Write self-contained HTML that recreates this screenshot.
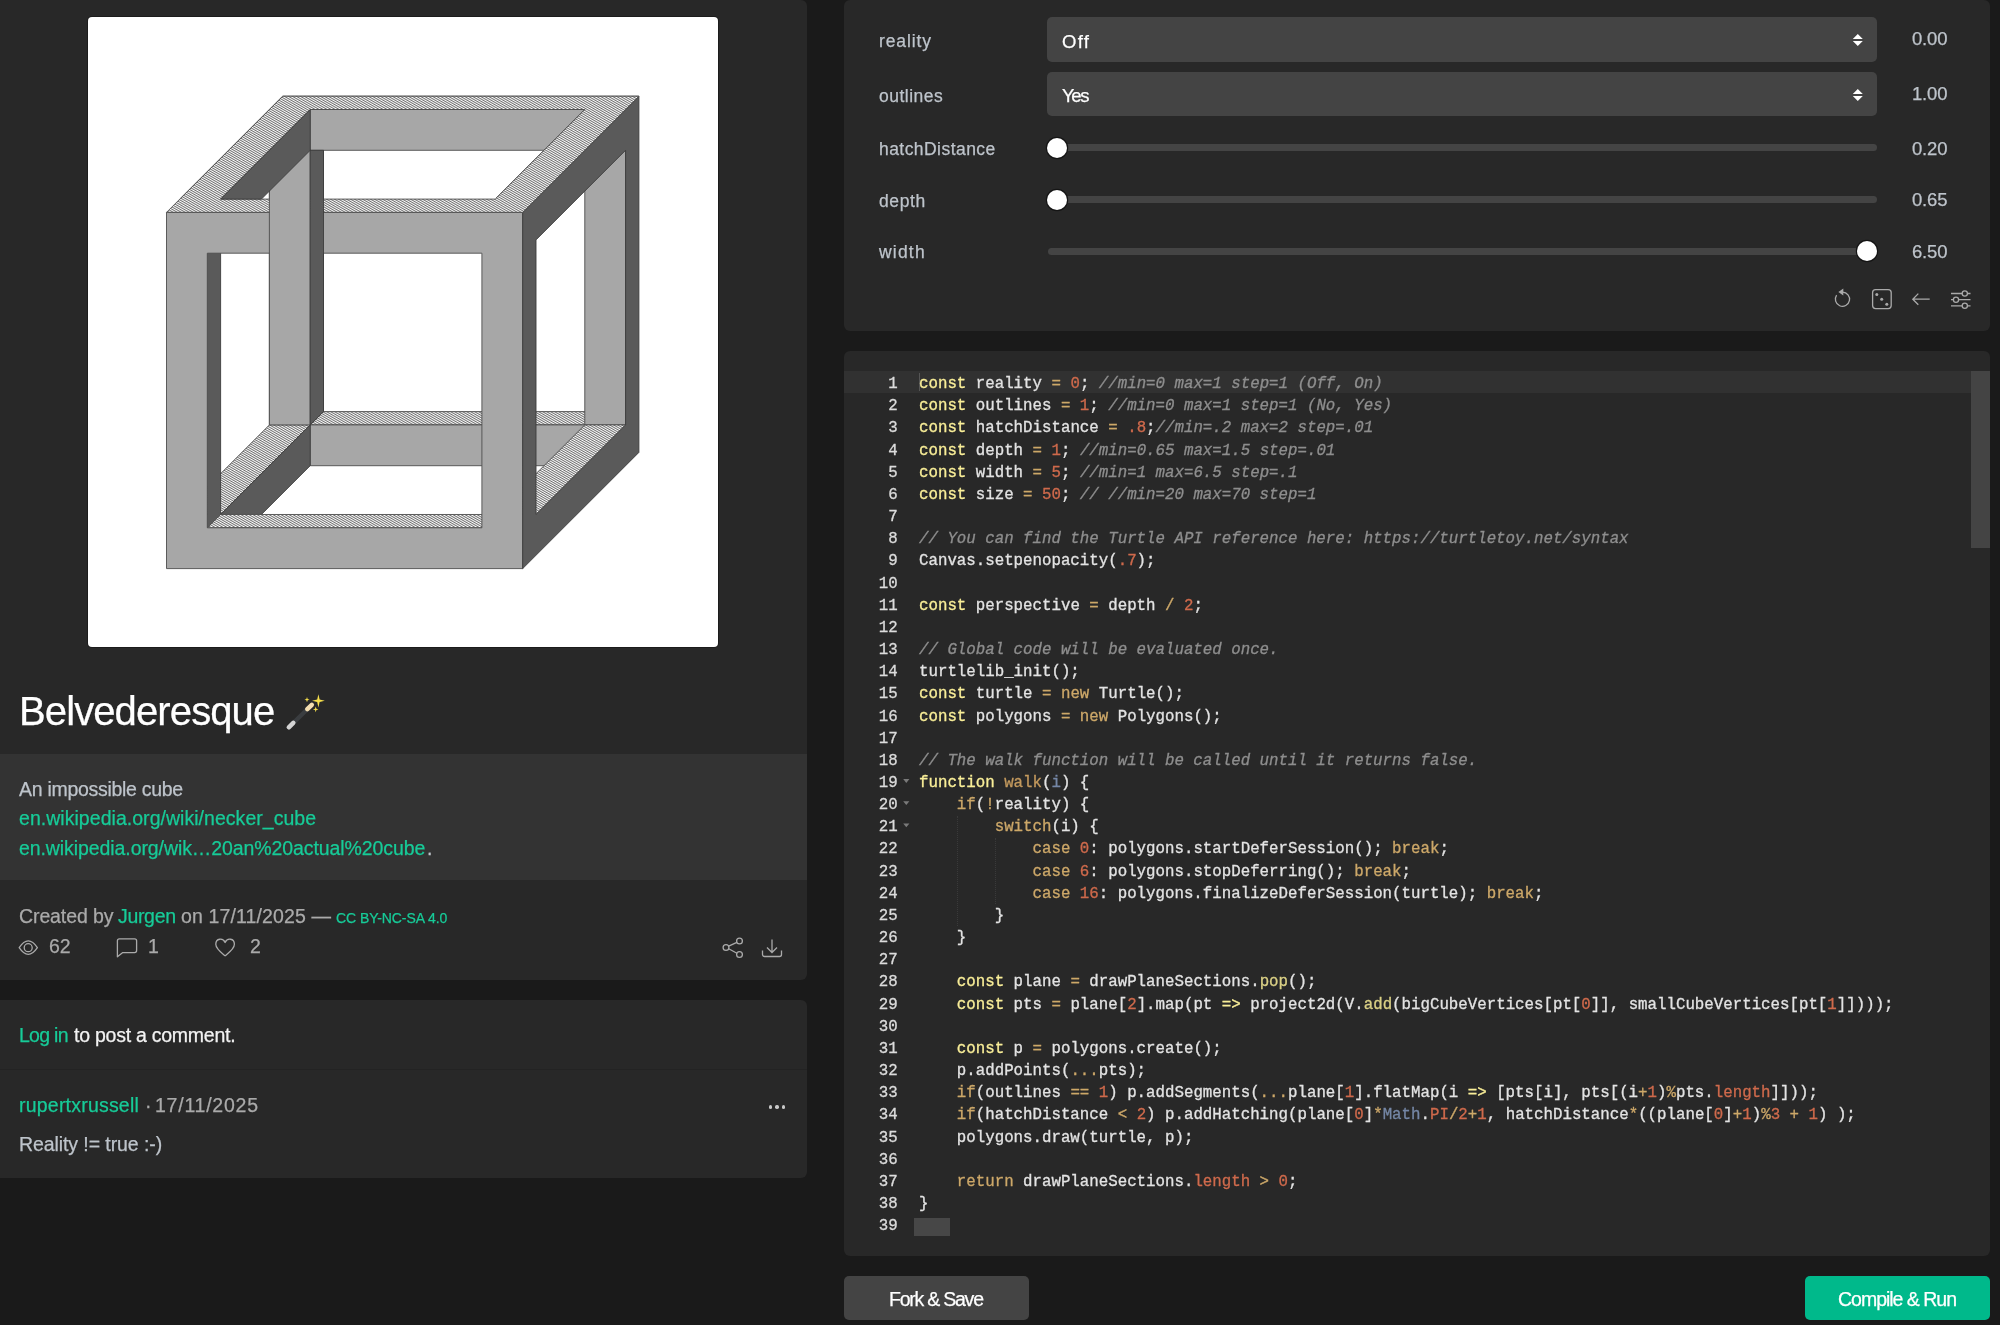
<!DOCTYPE html>
<html><head><meta charset="utf-8"><title>Belvederesque - Turtletoy</title>
<style>
html,body{margin:0;padding:0}
body{width:2000px;height:1325px;overflow:hidden;background:#1a1a1a;position:relative;font-family:"Liberation Sans",sans-serif}
.abs{position:absolute}
.tx{position:absolute;white-space:pre;line-height:0;font-family:"Liberation Sans",sans-serif;will-change:transform;-webkit-text-stroke:0.25px currentColor}
.tx::before{content:"";display:inline-block;height:0}
#ltop{left:0;top:0;width:807px;height:980px;background:#282828;border-radius:0 6px 6px 0}
#ldesc{left:0;top:753.8px;width:807px;height:126.7px;background:#333333}
#lmeta{left:0;top:880.5px;width:807px;height:99.5px;background:#282828;border-bottom-right-radius:6px}
#lcom{left:0;top:1000px;width:807px;height:178px;background:#282828;border-radius:0 6px 6px 0}
#ldiv{left:0;top:1069px;width:807px;height:1px;background:#232323}
#canvas{left:88px;top:17px;width:630px;height:630px;background:#fff;border-radius:4px;box-shadow:0 0 0 1px #1c1c1c;overflow:hidden}
#rtop{left:844px;top:0;width:1145.5px;height:330.6px;background:#282828;border-radius:6px}
.sel{position:absolute;left:1047px;width:830px;height:44.4px;background:#444444;border-radius:5px}
.track{position:absolute;left:1047.5px;width:829.5px;height:7px;background:#444444;border-radius:3.5px}
.thumb{position:absolute;width:20px;height:20px;background:#fff;border-radius:50%;box-shadow:0 0 0 1.2px #151515}
#editor{left:844px;top:351px;width:1145.5px;height:904.6px;background:#282828;border-radius:6px;overflow:hidden}
.cl{position:absolute;left:75px;height:22.16px;line-height:22.16px;white-space:pre;font-family:"Liberation Mono",monospace;font-size:15.77px;color:#e3e3e3;-webkit-text-stroke:0.3px currentColor}
.ln{position:absolute;left:0;width:53.6px;text-align:right;height:22.16px;line-height:22.16px;font-family:"Liberation Mono",monospace;font-size:15.77px;color:#dcdcdc;-webkit-text-stroke:0.3px currentColor}
.cl .s{color:#f9ee98}
.cl .k{color:#cda869}
.cl .n{color:#cf6a4c}
.cl .e{color:#c49a5e}
.cl .v{color:#7587a6}
.cl .sf{color:#dad085}
.cl .c{color:#8e8e8e;font-style:italic}
.btn{position:absolute;top:1276px;height:44px;border-radius:5px}
</style></head>
<body>
<div id="ltop" class="abs"></div>
<div id="ldesc" class="abs"></div>
<div id="lcom" class="abs"></div>
<div id="ldiv" class="abs"></div>
<div id="canvas" class="abs">
<svg width="630" height="630" viewBox="0 0 630 630">
<defs>
<pattern id="hatch" patternUnits="userSpaceOnUse" width="3.4" height="2" patternTransform="rotate(30)">
<rect width="3.4" height="2" fill="#ffffff"/>
<rect y="0" width="3.4" height="0.95" fill="#666"/>
</pattern>
</defs>
<style>
.f{fill:#a7a7a7;stroke:#4d4d4d;stroke-width:0.9}
.t{fill:url(#hatch);stroke:#4d4d4d;stroke-width:0.9}
.d{fill:#5a5a5a;stroke:#3d3d3d;stroke-width:0.9}
</style>
<defs><clipPath id="cpTop"><rect x="0" y="0" width="630" height="181.00"/></clipPath></defs>
<polygon class="d" points="222.19,133.31 222.19,407.91 235.50,394.60 235.50,120.00"/>
<polygon class="t" points="222.19,407.91 496.79,407.91 510.10,394.60 235.50,394.60"/>
<polygon class="f" points="222.19,92.51 496.79,92.51 496.79,133.31 222.19,133.31"/>
<polygon class="f" points="222.19,407.91 496.79,407.91 496.79,448.71 222.19,448.71"/>
<polygon class="f" points="181.39,133.31 222.19,133.31 222.19,407.91 181.39,407.91"/>
<polygon class="f" points="496.79,133.31 537.59,133.31 537.59,407.91 496.79,407.91"/>
<polygon class="t" points="91.81,497.49 132.61,497.49 222.19,407.91 181.39,407.91"/>
<polygon class="d" points="132.61,497.49 132.61,538.29 222.19,448.71 222.19,407.91"/>
<polygon class="t" points="407.21,497.49 448.01,497.49 537.59,407.91 496.79,407.91"/>
<polygon class="d" points="119.30,236.20 119.30,510.80 132.61,497.49 132.61,222.89"/>
<polygon class="t" points="119.30,510.80 393.90,510.80 407.21,497.49 132.61,497.49"/>
<path class="f" fill-rule="evenodd" d="M78.50 195.40 L434.70 195.40 L434.70 551.60 L78.50 551.60 Z M119.30 236.20 L393.90 236.20 L393.90 510.80 L119.30 510.80 Z"/>
<path class="d" fill-rule="evenodd" d="M434.70 195.40 L434.70 551.60 L550.90 435.40 L550.90 79.20 Z M448.01 222.89 L448.01 497.49 L537.59 407.91 L537.59 133.31 Z"/>
<path class="t" fill-rule="evenodd" d="M78.50 195.40 L434.70 195.40 L550.90 79.20 L194.70 79.20 Z M132.61 182.09 L407.21 182.09 L496.79 92.51 L222.19 92.51 Z"/>
<polygon class="f" points="181.39,133.31 222.19,133.31 222.19,407.91 181.39,407.91"/>
<polygon class="d" points="222.19,133.31 222.19,407.91 235.50,394.60 235.50,133.31"/>
<path class="t" fill-rule="evenodd" d="M78.50 195.40 L434.70 195.40 L550.90 79.20 L194.70 79.20 Z M132.61 182.09 L407.21 182.09 L496.79 92.51 L222.19 92.51 Z" clip-path="url(#cpTop)"/>
<polygon class="d" points="132.61,182.09 173.41,182.09 222.19,133.31 222.19,92.51"/>

</svg>
</div>
<!-- magic wand emoji -->
<svg class="abs" style="left:283px;top:690px" width="46" height="44" viewBox="0 0 46 44">
<line x1="10" y1="33.2" x2="24.5" y2="19" stroke="#3a3d40" stroke-width="4.3"/>
<line x1="5.8" y1="37.3" x2="10.3" y2="32.9" stroke="#d4d4d4" stroke-width="4.5" stroke-linecap="round"/>
<line x1="24.3" y1="19.2" x2="28.8" y2="14.8" stroke="#f4deb0" stroke-width="4.5" stroke-linecap="round"/>
<path d="M35.4 4.2 L36.6 9.6 L41.8 10.8 L36.6 12 L35.4 17.4 L34.2 12 L29 10.8 L34.2 9.6 Z" fill="#f6df4c"/>
<path d="M24 7.1 l0.65 1.9 l1.9 0.65 l-1.9 0.65 l-0.65 1.9 l-0.65 -1.9 l-1.9 -0.65 l1.9 -0.65 Z" fill="#f6df4c"/>
<path d="M32.7 16.6 l0.7 2.1 l2.1 0.7 l-2.1 0.7 l-0.7 2.1 l-0.7 -2.1 l-2.1 -0.7 l2.1 -0.7 Z" fill="#f6df4c"/>
</svg>
<!-- meta icons -->
<svg class="abs" style="left:0;top:930px" width="807" height="35" viewBox="0 930 807 35" fill="none" stroke="#aaaaaa" stroke-width="1.3">
<path d="M19.2 947.7 Q28.2 934.2 37.4 947.7 Q28.2 961.2 19.2 947.7 Z" stroke-linejoin="round"/>
<circle cx="28.2" cy="947.7" r="4"/>
<path d="M119.4 938.8 H134.6 Q136.6 938.8 136.6 940.8 V950.6 Q136.6 952.6 134.6 952.6 H122.8 L117.4 956.8 V940.8 Q117.4 938.8 119.4 938.8 Z" stroke-linejoin="round"/>
<path d="M225.1 942.5 C223 937.5 215.8 938.2 215.8 944.3 C215.8 948.8 220.6 952.2 225.1 955.8 C229.6 952.2 234.4 948.8 234.4 944.3 C234.4 938.2 227.2 937.5 225.1 942.5 Z" stroke-linejoin="round"/>
<circle cx="726" cy="947.5" r="2.9"/>
<circle cx="739.5" cy="941" r="2.9"/>
<circle cx="739.5" cy="954.5" r="2.9"/>
<path d="M728.7 946.2 L736.9 942.3 M728.7 948.8 L736.9 953.2"/>
<path d="M772 939.5 V952.5 M767 947.5 L772 952.5 L777 947.5"/>
<path d="M762.5 950.5 V954.5 Q762.5 956.5 764.5 956.5 H779.5 Q781.5 956.5 781.5 954.5 V950.5"/>
</svg>
<div class="abs" style="left:769.1px;top:1105.4px;width:3.4px;height:3.4px;border-radius:50%;background:#c8c8c8"></div>
<div class="abs" style="left:775.3px;top:1105.4px;width:3.4px;height:3.4px;border-radius:50%;background:#c8c8c8"></div>
<div class="abs" style="left:781.5px;top:1105.4px;width:3.4px;height:3.4px;border-radius:50%;background:#c8c8c8"></div>

<!-- right panel -->
<div id="rtop" class="abs"></div>
<div class="sel" style="top:17.4px"></div>
<div class="sel" style="top:72px"></div>
<svg class="abs" style="left:1850px;top:30px" width="16" height="75" viewBox="0 0 16 75" fill="#ffffff">
<path d="M2.8 8.9 L7.8 4 L12.8 8.9 Z M2.8 11.1 L12.8 11.1 L7.8 16 Z"/>
<path d="M2.8 63.9 L7.8 59 L12.8 63.9 Z M2.8 66.1 L12.8 66.1 L7.8 71 Z"/>
</svg>
<div class="track" style="top:144px"></div>
<div class="track" style="top:196.1px"></div>
<div class="track" style="top:247.8px"></div>
<div class="thumb" style="left:1047px;top:137.5px"></div>
<div class="thumb" style="left:1047px;top:189.6px"></div>
<div class="thumb" style="left:1857px;top:241.3px"></div>
<svg class="abs" style="left:1830px;top:285px" width="150" height="30" viewBox="1830 285 150 30" fill="none" stroke="#aaaaaa" stroke-width="1.3">
<path d="M1836.6 295.2 A7.1 7.1 0 1 0 1842.6 292.1"/>
<path d="M1838.4 292 L1843.3 288.6 L1843.3 295.4 Z" fill="#aaaaaa" stroke="none"/>
<rect x="1872.6" y="289.6" width="18.6" height="19" rx="3"/>
<circle cx="1876.8" cy="294.4" r="1.5" fill="#aaaaaa" stroke="none"/>
<circle cx="1881.7" cy="299.3" r="1.5" fill="#aaaaaa" stroke="none"/>
<circle cx="1886.8" cy="304.2" r="1.5" fill="#aaaaaa" stroke="none"/>
<path d="M1912.8 299.2 H1929.7 M1918.3 293.6 L1912.8 299.2 L1918.3 304.8"/>
<path d="M1951 293.5 H1962.2 M1967.4 293.5 H1970.5 M1951 299.7 H1953.4 M1958.6 299.7 H1970.5 M1951 305.8 H1962.2 M1967.4 305.8 H1970.5"/>
<circle cx="1964.8" cy="293.5" r="2.6"/>
<circle cx="1956" cy="299.7" r="2.6"/>
<circle cx="1964.8" cy="305.8" r="2.6"/>
</svg>

<!-- editor -->
<div id="editor" class="abs">
<div class="abs" style="left:0;top:19.8px;width:1127px;height:22.1px;background:#313131"></div>
<div class="abs" style="left:1127px;top:19.8px;width:18.5px;height:177.2px;background:#444444"></div>
<div class="abs" style="left:70.4px;top:867px;width:35.6px;height:18px;background:#474747"></div>
<div class="abs" style="left:74.5px;top:22px;width:1px;height:18px;background:#555"></div>
<div class="abs" style="left:112.5px;top:464.5px;width:0;height:110.8px;border-left:1px dotted #3a3a3a"></div>
<div class="abs" style="left:150.5px;top:486.7px;width:0;height:66.5px;border-left:1px dotted #3a3a3a"></div>
<div class="abs" style="left:0;top:0;width:1145.5px;height:904.6px;will-change:transform">
<div class="ln" style="top:22.10px">1</div>
<div class="ln" style="top:44.26px">2</div>
<div class="ln" style="top:66.42px">3</div>
<div class="ln" style="top:88.58px">4</div>
<div class="ln" style="top:110.74px">5</div>
<div class="ln" style="top:132.90px">6</div>
<div class="ln" style="top:155.06px">7</div>
<div class="ln" style="top:177.22px">8</div>
<div class="ln" style="top:199.38px">9</div>
<div class="ln" style="top:221.54px">10</div>
<div class="ln" style="top:243.70px">11</div>
<div class="ln" style="top:265.86px">12</div>
<div class="ln" style="top:288.02px">13</div>
<div class="ln" style="top:310.18px">14</div>
<div class="ln" style="top:332.34px">15</div>
<div class="ln" style="top:354.50px">16</div>
<div class="ln" style="top:376.66px">17</div>
<div class="ln" style="top:398.82px">18</div>
<div class="ln" style="top:420.98px">19</div>
<div class="ln" style="top:443.14px">20</div>
<div class="ln" style="top:465.30px">21</div>
<div class="ln" style="top:487.46px">22</div>
<div class="ln" style="top:509.62px">23</div>
<div class="ln" style="top:531.78px">24</div>
<div class="ln" style="top:553.94px">25</div>
<div class="ln" style="top:576.10px">26</div>
<div class="ln" style="top:598.26px">27</div>
<div class="ln" style="top:620.42px">28</div>
<div class="ln" style="top:642.58px">29</div>
<div class="ln" style="top:664.74px">30</div>
<div class="ln" style="top:686.90px">31</div>
<div class="ln" style="top:709.06px">32</div>
<div class="ln" style="top:731.22px">33</div>
<div class="ln" style="top:753.38px">34</div>
<div class="ln" style="top:775.54px">35</div>
<div class="ln" style="top:797.70px">36</div>
<div class="ln" style="top:819.86px">37</div>
<div class="ln" style="top:842.02px">38</div>
<div class="ln" style="top:864.18px">39</div>
<div class="cl" style="top:22.10px"><span class="s">const</span> reality <span class="k">=</span> <span class="n">0</span>; <span class="c">//min=0 max=1 step=1 (Off, On)</span></div>
<div class="cl" style="top:44.26px"><span class="s">const</span> outlines <span class="k">=</span> <span class="n">1</span>; <span class="c">//min=0 max=1 step=1 (No, Yes)</span></div>
<div class="cl" style="top:66.42px"><span class="s">const</span> hatchDistance <span class="k">=</span> <span class="n">.8</span>;<span class="c">//min=.2 max=2 step=.01</span></div>
<div class="cl" style="top:88.58px"><span class="s">const</span> depth <span class="k">=</span> <span class="n">1</span>; <span class="c">//min=0.65 max=1.5 step=.01</span></div>
<div class="cl" style="top:110.74px"><span class="s">const</span> width <span class="k">=</span> <span class="n">5</span>; <span class="c">//min=1 max=6.5 step=.1</span></div>
<div class="cl" style="top:132.90px"><span class="s">const</span> size <span class="k">=</span> <span class="n">50</span>; <span class="c">// //min=20 max=70 step=1</span></div>
<div class="cl" style="top:155.06px"></div>
<div class="cl" style="top:177.22px"><span class="c">// You can find the Turtle API reference here: https://turtletoy.net/syntax</span></div>
<div class="cl" style="top:199.38px">Canvas.setpenopacity(<span class="n">.7</span>);</div>
<div class="cl" style="top:221.54px"></div>
<div class="cl" style="top:243.70px"><span class="s">const</span> perspective <span class="k">=</span> depth <span class="k">/</span> <span class="n">2</span>;</div>
<div class="cl" style="top:265.86px"></div>
<div class="cl" style="top:288.02px"><span class="c">// Global code will be evaluated once.</span></div>
<div class="cl" style="top:310.18px">turtlelib_init();</div>
<div class="cl" style="top:332.34px"><span class="s">const</span> turtle <span class="k">=</span> <span class="k">new</span> Turtle();</div>
<div class="cl" style="top:354.50px"><span class="s">const</span> polygons <span class="k">=</span> <span class="k">new</span> Polygons();</div>
<div class="cl" style="top:376.66px"></div>
<div class="cl" style="top:398.82px"><span class="c">// The walk function will be called until it returns false.</span></div>
<div class="cl" style="top:420.98px"><span class="s">function</span> <span class="e">walk</span>(<span class="v">i</span>) {</div>
<div class="cl" style="top:443.14px">    <span class="k">if</span>(<span class="k">!</span>reality) {</div>
<div class="cl" style="top:465.30px">        <span class="k">switch</span>(i) {</div>
<div class="cl" style="top:487.46px">            <span class="k">case</span> <span class="n">0</span>: polygons.startDeferSession(); <span class="k">break</span>;</div>
<div class="cl" style="top:509.62px">            <span class="k">case</span> <span class="n">6</span>: polygons.stopDeferring(); <span class="k">break</span>;</div>
<div class="cl" style="top:531.78px">            <span class="k">case</span> <span class="n">16</span>: polygons.finalizeDeferSession(turtle); <span class="k">break</span>;</div>
<div class="cl" style="top:553.94px">        }</div>
<div class="cl" style="top:576.10px">    }</div>
<div class="cl" style="top:598.26px"></div>
<div class="cl" style="top:620.42px">    <span class="s">const</span> plane <span class="k">=</span> drawPlaneSections.<span class="sf">pop</span>();</div>
<div class="cl" style="top:642.58px">    <span class="s">const</span> pts <span class="k">=</span> plane[<span class="n">2</span>].map(pt <span class="s">=&gt;</span> project2d(V.<span class="sf">add</span>(bigCubeVertices[pt[<span class="n">0</span>]], smallCubeVertices[pt[<span class="n">1</span>]])));</div>
<div class="cl" style="top:664.74px"></div>
<div class="cl" style="top:686.90px">    <span class="s">const</span> p <span class="k">=</span> polygons.create();</div>
<div class="cl" style="top:709.06px">    p.addPoints(<span class="k">...</span>pts);</div>
<div class="cl" style="top:731.22px">    <span class="k">if</span>(outlines <span class="k">==</span> <span class="n">1</span>) p.addSegments(<span class="k">...</span>plane[<span class="n">1</span>].flatMap(i <span class="s">=&gt;</span> [pts[i], pts[(i<span class="k">+</span><span class="n">1</span>)<span class="k">%</span>pts.<span class="n">length</span>]]));</div>
<div class="cl" style="top:753.38px">    <span class="k">if</span>(hatchDistance <span class="k">&lt;</span> <span class="n">2</span>) p.addHatching(plane[<span class="n">0</span>]<span class="k">*</span><span class="v">Math</span>.<span class="n">PI</span><span class="k">/</span><span class="n">2</span><span class="k">+</span><span class="n">1</span>, hatchDistance<span class="k">*</span>((plane[<span class="n">0</span>]<span class="k">+</span><span class="n">1</span>)<span class="k">%</span><span class="n">3</span> <span class="k">+</span> <span class="n">1</span>) );</div>
<div class="cl" style="top:775.54px">    polygons.draw(turtle, p);</div>
<div class="cl" style="top:797.70px"></div>
<div class="cl" style="top:819.86px">    <span class="k">return</span> drawPlaneSections.<span class="n">length</span> <span class="k">&gt;</span> <span class="n">0</span>;</div>
<div class="cl" style="top:842.02px">}</div>
<div class="cl" style="top:864.18px"></div>
</div>
<svg class="abs" style="left:58px;top:420px" width="14" height="70" viewBox="0 0 14 70" fill="#7a7a7a">
<path d="M1.2 8.1 H7.4 L4.3 11.9 Z"/>
<path d="M1.2 30.3 H7.4 L4.3 34.1 Z"/>
<path d="M1.2 52.4 H7.4 L4.3 56.2 Z"/>
</svg>
</div>
<div class="btn" style="left:844.4px;width:184.6px;background:#444444"></div>
<div class="btn" style="left:1805px;width:184.6px;background:#00b98b"></div>
<div class="tx" style="left:18.60px;top:711.14px;font-size:40px;color:#ffffff;letter-spacing:-0.888px">Belvederesque</div>
<div class="tx" style="left:19.10px;top:788.84px;font-size:19.5px;color:#bec4cb;letter-spacing:-0.288px">An impossible cube</div>
<div class="tx" style="left:19.10px;top:818.34px;font-size:19.5px;color:#17cb98;letter-spacing:0.037px">en.wikipedia.org/wiki/necker_cube</div>
<div class="tx" style="left:19.10px;top:847.54px;font-size:19.5px;color:#17cb98;letter-spacing:-0.084px">en.wikipedia.org/wik…20an%20actual%20cube</div>
<div class="tx" style="left:426.50px;top:847.54px;font-size:19.5px;color:#bec4cb;letter-spacing:0.000px">.</div>
<div class="tx" style="left:19.00px;top:916.34px;font-size:19.5px;color:#aaaaaa;letter-spacing:-0.099px">Created by</div>
<div class="tx" style="left:118.00px;top:916.34px;font-size:19.5px;color:#17cb98;letter-spacing:-0.325px">Jurgen</div>
<div class="tx" style="left:180.60px;top:916.34px;font-size:19.5px;color:#aaaaaa;letter-spacing:0.129px">on 17/11/2025 —</div>
<div class="tx" style="left:336.30px;top:918.25px;font-size:14px;color:#17cb98;letter-spacing:-0.065px">CC BY-NC-SA 4.0</div>
<div class="tx" style="left:48.70px;top:945.64px;font-size:19.5px;color:#aaaaaa;letter-spacing:-0.103px">62</div>
<div class="tx" style="left:148.40px;top:945.64px;font-size:19.5px;color:#aaaaaa;letter-spacing:0.000px">1</div>
<div class="tx" style="left:249.60px;top:945.64px;font-size:19.5px;color:#aaaaaa;letter-spacing:0.000px">2</div>
<div class="tx" style="left:19.45px;top:1034.94px;font-size:19.5px;color:#17cb98;letter-spacing:-0.728px">Log in</div>
<div class="tx" style="left:73.75px;top:1034.94px;font-size:19.5px;color:#f2f2f2;letter-spacing:-0.249px">to post a comment.</div>
<div class="tx" style="left:19.45px;top:1104.99px;font-size:19.5px;color:#17cb98;letter-spacing:0.212px">rupertxrussell</div>
<div class="tx" style="left:145.00px;top:1104.99px;font-size:19.5px;color:#aaaaaa;letter-spacing:0.000px">·</div>
<div class="tx" style="left:155.20px;top:1104.99px;font-size:19.5px;color:#aaaaaa;letter-spacing:0.760px">17/11/2025</div>
<div class="tx" style="left:19.45px;top:1143.99px;font-size:19.5px;color:#bec4cb;letter-spacing:-0.082px">Reality != true :-)</div>
<div class="tx" style="left:878.75px;top:40.84px;font-size:17.5px;color:#bec4cb;letter-spacing:0.869px">reality</div>
<div class="tx" style="left:878.75px;top:95.84px;font-size:17.5px;color:#bec4cb;letter-spacing:0.489px">outlines</div>
<div class="tx" style="left:878.75px;top:148.94px;font-size:17.5px;color:#bec4cb;letter-spacing:0.445px">hatchDistance</div>
<div class="tx" style="left:878.75px;top:200.84px;font-size:17.5px;color:#bec4cb;letter-spacing:0.613px">depth</div>
<div class="tx" style="left:878.75px;top:252.04px;font-size:17.5px;color:#bec4cb;letter-spacing:1.198px">width</div>
<div class="tx" style="left:1061.90px;top:41.79px;font-size:18.5px;color:#ffffff;letter-spacing:1.278px">Off</div>
<div class="tx" style="left:1061.90px;top:96.39px;font-size:18.5px;color:#ffffff;letter-spacing:-1.344px">Yes</div>
<div class="tx" style="left:1912.00px;top:39.29px;font-size:18.5px;color:#bec4cb;letter-spacing:-0.172px">0.00</div>
<div class="tx" style="left:1912.00px;top:94.19px;font-size:18.5px;color:#bec4cb;letter-spacing:-0.172px">1.00</div>
<div class="tx" style="left:1912.00px;top:148.59px;font-size:18.5px;color:#bec4cb;letter-spacing:-0.172px">0.20</div>
<div class="tx" style="left:1912.00px;top:200.49px;font-size:18.5px;color:#bec4cb;letter-spacing:-0.172px">0.65</div>
<div class="tx" style="left:1912.00px;top:251.69px;font-size:18.5px;color:#bec4cb;letter-spacing:-0.172px">6.50</div>
<div class="tx" style="left:888.50px;top:1298.74px;font-size:19.5px;color:#ffffff;letter-spacing:-1.230px">Fork &amp; Save</div>
<div class="tx" style="left:1837.50px;top:1298.74px;font-size:19.5px;color:#ffffff;letter-spacing:-1.012px">Compile &amp; Run</div>
</body></html>
